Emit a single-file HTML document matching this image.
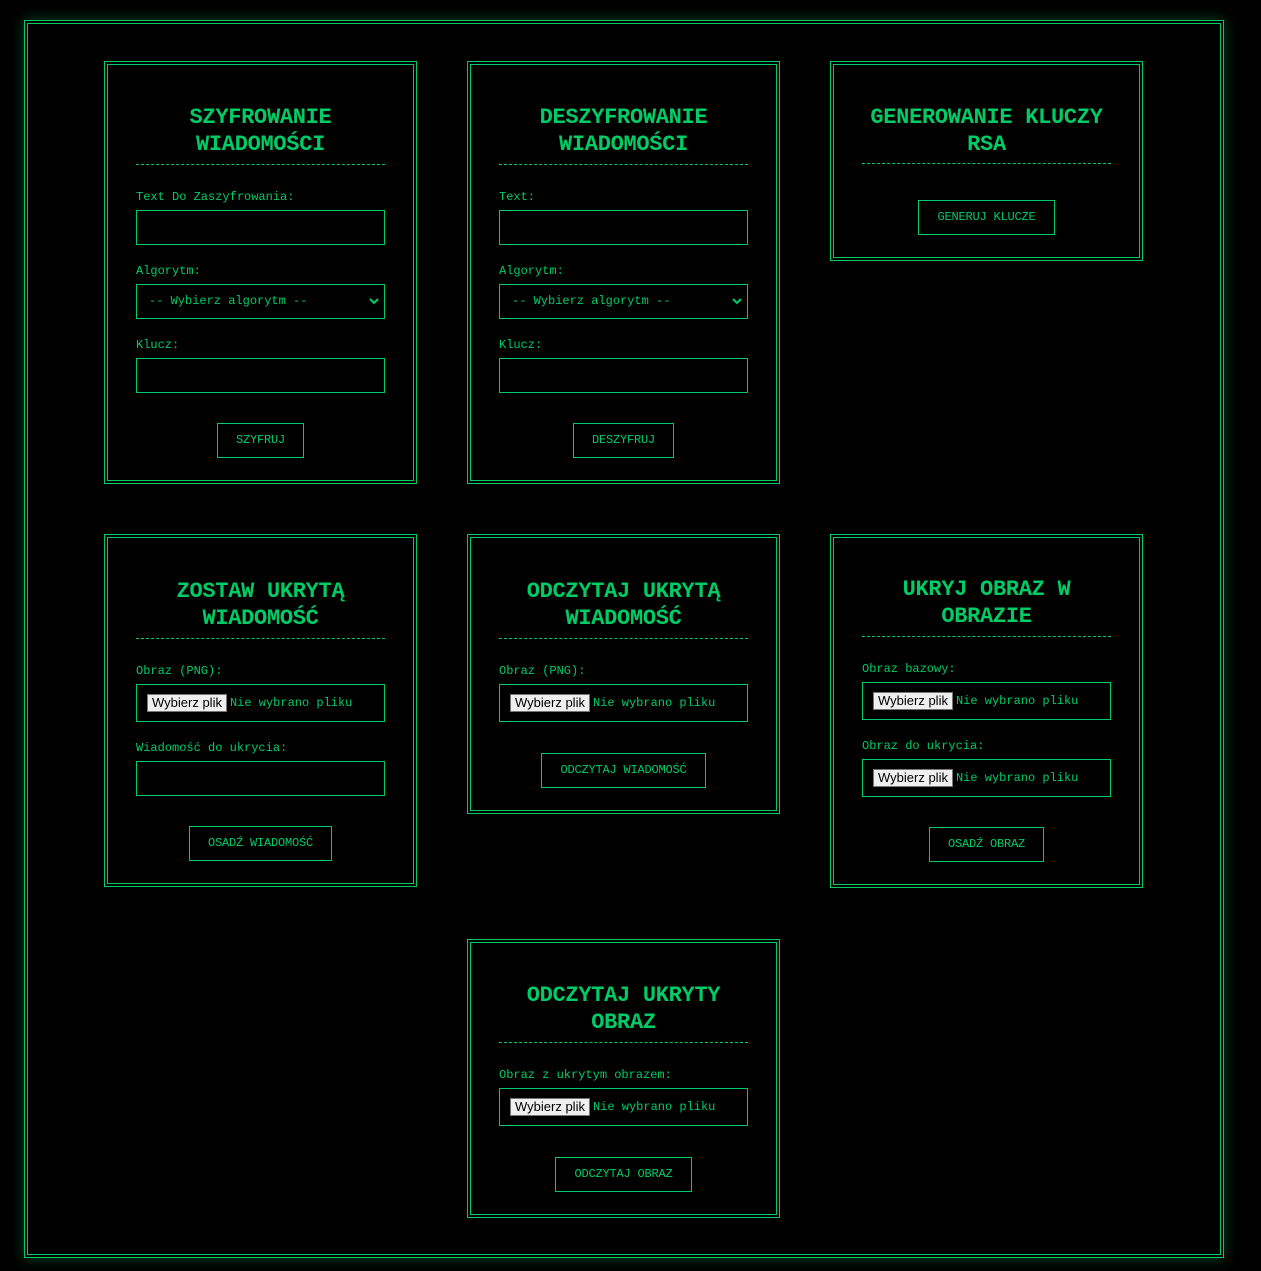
<!DOCTYPE html>
<html><head><meta charset="utf-8">
<style>
*{box-sizing:border-box;margin:0;padding:0}
html,body{width:1261px;height:1271px;background:#000;overflow:hidden}
body{font-family:"Liberation Mono",monospace;color:#00cc66;position:relative}
.outer{position:absolute;left:24px;top:20px;width:1200px;height:1238px;border:4px double #00cc66;box-shadow:0 0 14px rgba(0,204,102,.35)}
.card{position:absolute;width:313px;border:4px double #00cc66;padding:39px 28px 22px}
h2{font-size:22px;line-height:27px;text-align:center;font-weight:bold;letter-spacing:-0.3px}
.hr{border-top:1px dashed #00cc66;margin-top:6px}
label{display:block;font-size:12px;line-height:14px;margin-top:19px;margin-bottom:6px}
.hr+label{margin-top:25px}
.inp{height:35px;border:1px solid #00cc66}
.sel{height:35px;border:1px solid #00cc66;font-size:12px;line-height:33px;padding-left:12px;position:relative}
.sel svg{position:absolute;right:5px;top:13px}
.file{height:38px;border:1px solid #00cc66;padding:9px 0 0 10px;font-size:12px;white-space:nowrap}
.fb{display:inline-block;font-family:"Liberation Sans",sans-serif;font-size:13px;color:#000;background:#efefef;border:1px solid #767676;padding:0 4px;height:18px;line-height:16px;vertical-align:middle;margin-right:3px}
.btnw{text-align:center;margin-top:30px}
.btn{display:inline-block;border:1px solid #00cc66;height:35px;line-height:33px;padding:0 18px;font-size:12px;letter-spacing:-0.2px}
</style></head><body>
<div class="outer"></div>

<div class="card" style="left:104px;top:61px">
<h2>SZYFROWANIE<br>WIADOMOŚCI</h2><div class="hr"></div>
<label>Text Do Zaszyfrowania:</label><div class="inp"></div>
<label>Algorytm:</label><div class="sel">-- Wybierz algorytm --<svg width="10" height="7" viewBox="0 0 10 7"><path d="M1 1l4 4 4-4" stroke="#00cc66" stroke-width="2" fill="none"/></svg></div>
<label>Klucz:</label><div class="inp"></div>
<div class="btnw"><span class="btn">SZYFRUJ</span></div>
</div>

<div class="card" style="left:467px;top:61px">
<h2>DESZYFROWANIE<br>WIADOMOŚCI</h2><div class="hr"></div>
<label>Text:</label><div class="inp"></div>
<label>Algorytm:</label><div class="sel">-- Wybierz algorytm --<svg width="10" height="7" viewBox="0 0 10 7"><path d="M1 1l4 4 4-4" stroke="#00cc66" stroke-width="2" fill="none"/></svg></div>
<label>Klucz:</label><div class="inp"></div>
<div class="btnw"><span class="btn">DESZYFRUJ</span></div>
</div>

<div class="card" style="left:830px;top:61px;padding-bottom:22px">
<h2>GENEROWANIE KLUCZY<br>RSA</h2><div class="hr" style="margin-top:5px"></div>
<div class="btnw" style="margin-top:36px"><span class="btn">GENERUJ KLUCZE</span></div>
</div>

<div class="card" style="left:104px;top:534px;padding-top:40px">
<h2>ZOSTAW UKRYTĄ<br>WIADOMOŚĆ</h2><div class="hr"></div>
<label>Obraz (PNG):</label><div class="file"><span class="fb">Wybierz plik</span>Nie wybrano pliku</div>
<label>Wiadomość do ukrycia:</label><div class="inp"></div>
<div class="btnw"><span class="btn">OSADŹ WIADOMOŚĆ</span></div>
</div>

<div class="card" style="left:467px;top:534px;padding-top:40px">
<h2>ODCZYTAJ UKRYTĄ<br>WIADOMOŚĆ</h2><div class="hr"></div>
<label>Obraz (PNG):</label><div class="file"><span class="fb">Wybierz plik</span>Nie wybrano pliku</div>
<div class="btnw" style="margin-top:31px"><span class="btn">ODCZYTAJ WIADOMOŚĆ</span></div>
</div>

<div class="card" style="left:830px;top:534px;padding-top:38px">
<h2>UKRYJ OBRAZ W<br>OBRAZIE</h2><div class="hr"></div>
<label>Obraz bazowy:</label><div class="file"><span class="fb">Wybierz plik</span>Nie wybrano pliku</div>
<label>Obraz do ukrycia:</label><div class="file"><span class="fb">Wybierz plik</span>Nie wybrano pliku</div>
<div class="btnw"><span class="btn">OSADŹ OBRAZ</span></div>
</div>

<div class="card" style="left:467px;top:939px;padding-top:39px">
<h2>ODCZYTAJ UKRYTY<br>OBRAZ</h2><div class="hr"></div>
<label>Obraz z ukrytym obrazem:</label><div class="file"><span class="fb">Wybierz plik</span>Nie wybrano pliku</div>
<div class="btnw" style="margin-top:31px"><span class="btn">ODCZYTAJ OBRAZ</span></div>
</div>
</body></html>
